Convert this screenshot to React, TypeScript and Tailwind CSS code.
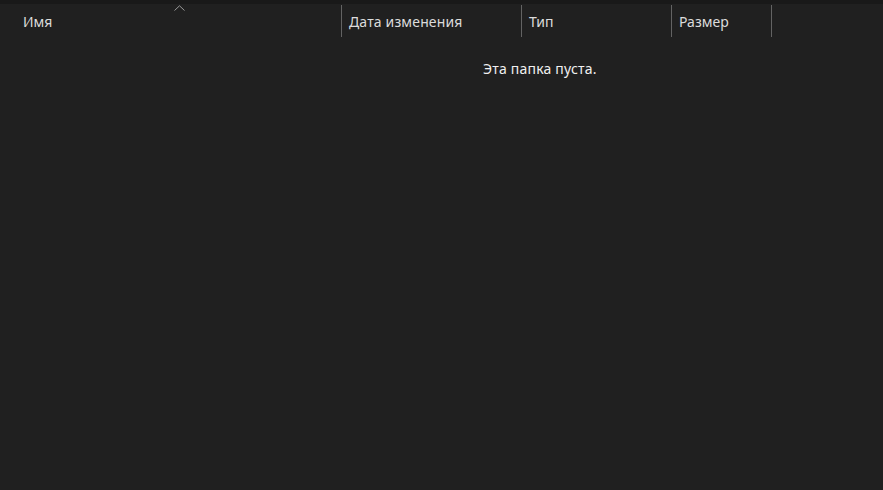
import React from "react";

export default function App() {
  const font = { fontFamily: '"Segoe UI", "Noto Sans", "Open Sans", sans-serif' };
  return (
    <div className="w-[883px] h-[490px] bg-[#202020] overflow-hidden text-[14px]" style={font}>
      <div className="h-[4px] bg-[#191919]" />
      <div className="relative flex h-[33px] text-[#dcdcdc]">
        <svg className="absolute left-[174px] top-[1px]" width="11" height="7" viewBox="0 0 11 7">
          <path d="M0.5 5.5 L5.5 0.8 L10.5 5.5" fill="none" stroke="#9a9a9a" strokeWidth="1" />
        </svg>
        <div className="w-[341px] pl-[23px] pt-[8px] leading-[20px]">Имя</div>
        <div className="w-[180px] flex">
          <div className="w-px h-[32px] mt-[1px] bg-[#636363]" />
          <div className="pl-[7px] pt-[8px] leading-[20px] tracking-[0.15px]">Дата изменения</div>
        </div>
        <div className="w-[150px] flex">
          <div className="w-px h-[32px] mt-[1px] bg-[#636363]" />
          <div className="pl-[7px] pt-[8px] leading-[20px]">Тип</div>
        </div>
        <div className="w-[100px] flex">
          <div className="w-px h-[32px] mt-[1px] bg-[#636363]" />
          <div className="pl-[7px] pt-[8px] leading-[20px]">Размер</div>
        </div>
        <div className="w-px h-[32px] mt-[1px] bg-[#636363]" />
      </div>
      <div className="pl-[483px] pt-[22px] leading-[20px] text-[#f0f0f0] tracking-[0.2px]">Эта папка пуста.</div>
    </div>
  );
}
